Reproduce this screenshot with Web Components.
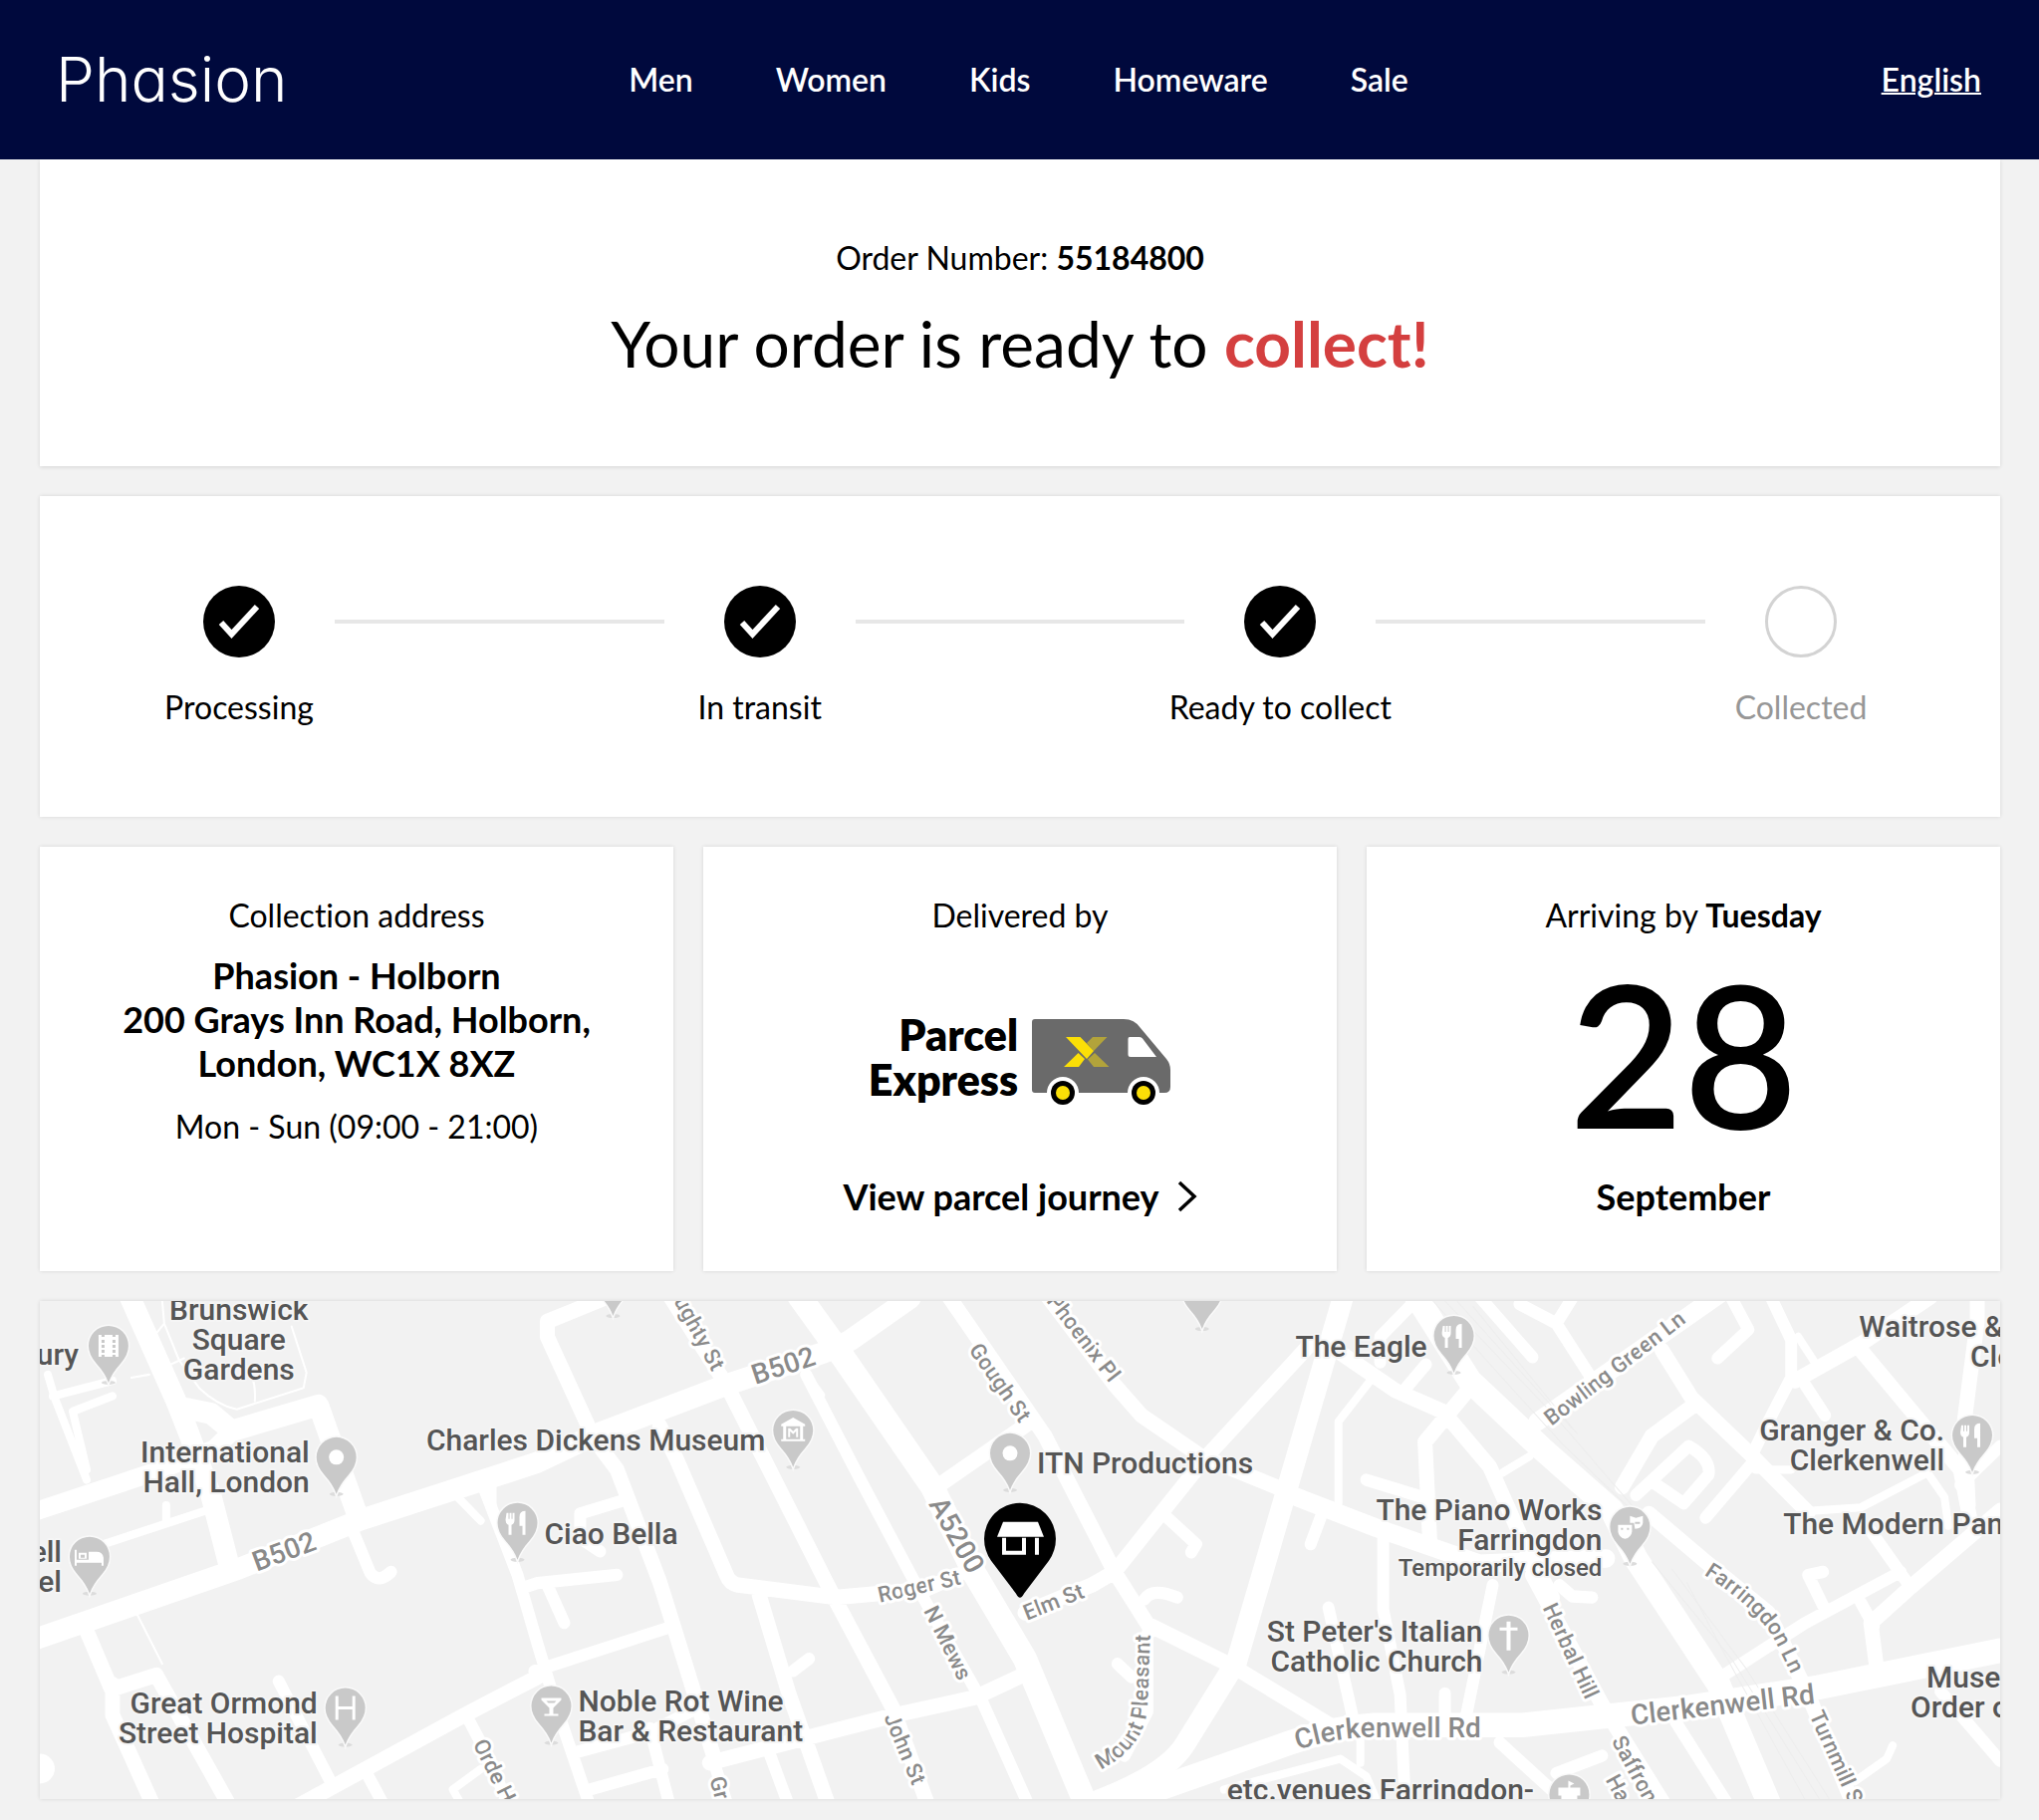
<!DOCTYPE html>
<html lang="en">
<head>
<meta charset="utf-8">
<meta name="viewport" content="width=device-width, initial-scale=1">
<title>Phasion - Your order</title>
<style>
    :root {
        --navy: #00093d;
        --page: #f2f2f2;
        --red: #d43f3f;
        --line: #e7e7e7;
        --muted: #979797;
    }

    body {
        background-color: var(--page);
        color: #000;
        font-family: Lato, "Open Sans", sans-serif;
        font-size: 32px;
        font-variant-ligatures: none;
        line-height: 40px;
        margin: 0;
    }

    main {
        display: flex;
        flex-direction: column;
        gap: 30px;
        padding: 0 39px 20px 40px;
    }

    .columns {
        display: grid;
        gap: 30px;
        grid-template-columns: repeat(3, 1fr);
    }
</style>
</head>
<body>
    <site-header>
        <a slot="nav" href="#men">Men</a>
        <a slot="nav" href="#women">Women</a>
        <a slot="nav" href="#kids">Kids</a>
        <a slot="nav" href="#homeware">Homeware</a>
        <a slot="nav" href="#sale">Sale</a>
        <a slot="language" href="#language">English</a>
    </site-header>

    <main>
        <order-status number="55184800">Your order is ready to <strong>collect!</strong></order-status>

        <progress-tracker>
            <progress-step done>Processing</progress-step>
            <progress-step done>In transit</progress-step>
            <progress-step done>Ready to collect</progress-step>
            <progress-step>Collected</progress-step>
        </progress-tracker>

        <section class="columns">
            <info-card>
                <span slot="title">Collection address</span>
                <collection-address hours="Mon - Sun (09:00 - 21:00)">
                    Phasion - Holborn<br>200 Grays Inn Road, Holborn,<br>London, WC1X 8XZ
                </collection-address>
            </info-card>
            <info-card>
                <span slot="title">Delivered by</span>
                <parcel-carrier href="#journey">Parcel<br>Express</parcel-carrier>
            </info-card>
            <info-card>
                <span slot="title">Arriving by <b>Tuesday</b></span>
                <arrival-date day="28" month="September"></arrival-date>
            </info-card>
        </section>

        <store-map></store-map>
    </main>

<script>
    class SiteHeader extends HTMLElement {
        constructor() {
            super();
            this.attachShadow({mode: 'open'});
        }

        connectedCallback() {
            this.shadowRoot.innerHTML =
            `<style>
                :host {
                    align-items: center;
                    background-color: var(--navy);
                    box-sizing: border-box;
                    color: #fff;
                    display: grid;
                    font-weight: 600;
                    grid-template-columns: 1fr auto 1fr;
                    min-height: 160px;
                    padding: 0 58px 0 56px;
                    position: relative;
                }

                #logo {
                    color: inherit;
                    font-family: Inter, Lato, sans-serif;
                    font-feature-settings: "cv11";
                    font-size: 62px;
                    font-weight: 300;
                    line-height: 64px;
                    text-decoration: none;
                }

                nav {
                    display: flex;
                    gap: 83px;
                }

                ::slotted(a) {
                    color: inherit;
                    text-decoration: none;
                }

                ::slotted([slot="language"]) {
                    justify-self: end;
                    text-decoration: underline;
                    text-decoration-thickness: 2px;
                }
            </style>
            <a id="logo" href="#home">Phasion</a>
            <nav><slot name="nav"></slot></nav>
            <slot name="language"></slot>`;
        }
    }

    class OrderStatus extends HTMLElement {
        constructor() {
            super();
            this.attachShadow({mode: 'open'});
        }

        connectedCallback() {
            this.shadowRoot.innerHTML =
            `<style>
                :host {
                    background-color: #fff;
                    box-shadow: 0 1px 4px rgba(0, 0, 0, 0.12);
                    display: block;
                    padding: 79px 40px 85px;
                    text-align: center;
                }

                p, h1 { margin: 0; }

                h1 {
                    font-size: 64px;
                    font-weight: 400;
                    line-height: 76px;
                    margin-top: 28px;
                }

                ::slotted(strong) {
                    color: var(--red);
                    font-weight: 700;
                }
            </style>
            <p>Order Number: <b>${this.getAttribute('number')}</b></p>
            <h1><slot></slot></h1>`;
        }
    }

    class ProgressTracker extends HTMLElement {
        constructor() {
            super();
            this.attachShadow({mode: 'open'});
        }

        connectedCallback() {
            this.shadowRoot.innerHTML =
            `<style>
                :host {
                    background-color: #fff;
                    box-shadow: 0 0 4px rgba(0, 0, 0, 0.12);
                    display: flex;
                    padding: 90px 104px;
                }
            </style>
            <slot></slot>`;
        }
    }

    class ProgressStep extends HTMLElement {
        constructor() {
            super();
            this.attachShadow({mode: 'open'});
        }

        connectedCallback() {
            const done = this.hasAttribute('done');

            // every step but the first draws the line that leads to it
            this.shadowRoot.innerHTML =
            `<style>
                :host {
                    display: flex;
                    flex: 1 1 192px;
                }

                :host(:first-child) { flex: 0 0 192px; }
                :host(:first-child) #line { display: none; }

                #line {
                    background-color: var(--line);
                    flex: 1;
                    height: 4px;
                    margin-top: 34px;
                }

                #step {
                    align-items: center;
                    color: ${done ? 'inherit' : 'var(--muted)'};
                    display: flex;
                    flex-direction: column;
                    gap: 30px;
                    width: 192px;
                    white-space: nowrap;
                }

                svg { display: block; }
            </style>
            <div id="line"></div>
            <div id="step">
                <svg width="72" height="72" viewBox="-36 -36 72 72" aria-hidden="true">
                    ${done
                    ? `<circle r="36"/><path d="M-18 1 -7.500 12.500 18-15" fill="none" stroke="#fff" stroke-width="6"/>`
                    : `<circle r="34.500" fill="#fff" stroke="#d3d3d3" stroke-width="3"/>`}
                </svg>
                <span><slot></slot></span>
            </div>`;
        }
    }

    class InfoCard extends HTMLElement {
        constructor() {
            super();
            this.attachShadow({mode: 'open'});
        }

        connectedCallback() {
            this.shadowRoot.innerHTML =
            `<style>
                :host {
                    background-color: #fff;
                    box-shadow: 0 0 4px rgba(0, 0, 0, 0.12);
                    box-sizing: border-box;
                    display: flex;
                    flex-direction: column;
                    min-height: 426px;
                    padding: 49px 40px 53px;
                    text-align: center;
                }

                h2 {
                    font: inherit;
                    margin: 0;
                }
            </style>
            <h2><slot name="title"></slot></h2>
            <slot></slot>`;
        }
    }

    class CollectionAddress extends HTMLElement {
        constructor() {
            super();
            this.attachShadow({mode: 'open'});
        }

        connectedCallback() {
            this.shadowRoot.innerHTML =
            `<style>
                :host { display: block; }

                p { margin: 0; }

                #address {
                    font-size: 36px;
                    font-weight: 700;
                    line-height: 44px;
                    margin-top: 18px;
                }

                #hours { margin-top: 22px; }
            </style>
            <p id="address"><slot></slot></p>
            <p id="hours">${this.getAttribute('hours')}</p>`;
        }
    }

    class ParcelCarrier extends HTMLElement {
        constructor() {
            super();
            this.attachShadow({mode: 'open'});
        }

        connectedCallback() {
            this.shadowRoot.innerHTML =
            `<style>
                :host {
                    align-items: center;
                    display: flex;
                    flex: 1;
                    flex-direction: column;
                    justify-content: space-between;
                }

                #carrier {
                    align-items: center;
                    display: flex;
                    font-size: 43px;
                    font-weight: 800;
                    gap: 14px;
                    line-height: 45px;
                    margin-top: 77px;
                    text-align: right;
                }

                #carrier span { padding-bottom: 10px; }

                a {
                    align-items: center;
                    color: inherit;
                    display: flex;
                    font-size: 36px;
                    font-weight: 700;
                    gap: 18px;
                    line-height: 44px;
                    text-decoration: none;
                }

                svg { display: block; }
            </style>
            <div id="carrier">
                <span><slot></slot></span>
                <svg width="140" height="87" viewBox="0 0 140 87" aria-hidden="true">
                    <path fill="#6a6a6a" d="M3 0H92Q103 0 109 9L135 40Q139 45 139 51V68Q139 74 133 74H3Q0 74 0 71V3Q0 0 3 0Z"/>
                    <path fill="#fff" d="M98 18H108Q110 18 111 19.500L125 38H99Q96.500 38 96.500 35.500V20Q96.500 18 98 18Z"/>
                    <path fill="#b2a33b" d="M61 18H75.500L62 32 55 24ZM63 34 77.500 48H62L56 40.500Z"/>
                    <path fill="#fbdf07" d="M34 18H48.500L62 32 55 40ZM46.500 34 53 40 47 48H32Z"/>
                    <g fill="#fff"><circle cx="31" cy="74" r="16"/><circle cx="112" cy="74" r="16"/></g>
                    <circle cx="31" cy="74" r="12"/><circle cx="112" cy="74" r="12"/>
                    <g fill="#fbdf07"><circle cx="31" cy="74" r="7"/><circle cx="112" cy="74" r="7"/></g>
                </svg>
            </div>
            <a href="${this.getAttribute('href')}">View parcel journey
                <svg width="20" height="32" viewBox="0 0 20 32" aria-hidden="true">
                    <path d="M2 2 17 16 2 30" fill="none" stroke="#000" stroke-width="3.500"/>
                </svg>
            </a>`;
        }
    }

    class ArrivalDate extends HTMLElement {
        constructor() {
            super();
            this.attachShadow({mode: 'open'});
        }

        connectedCallback() {
            this.shadowRoot.innerHTML =
            `<style>
                :host {
                    display: flex;
                    flex: 1;
                    flex-direction: column;
                    justify-content: space-between;
                }

                #day {
                    font-size: 198px;
                    font-weight: 600;
                    line-height: 200px;
                    margin-top: 18px;
                }

                #month {
                    font-size: 36px;
                    font-weight: 700;
                    line-height: 44px;
                }
            </style>
            <span id="day">${this.getAttribute('day')}</span>
            <span id="month">${this.getAttribute('month')}</span>`;
        }
    }

    // roads by stroke width
    const ROADS = {
        24: [
            'M763-5 800 45 897 182 940 268 990 350 1050 490',
            'M1090 489 1257 432Q1300 417 1340 415L1490 415 1654 398 1787 378 1970 342',
            'M1383-5 1437 78 1510 145 1580 205 1604 252 1687 375 1737 490'
        ],
        21: [
            'M-5 331 200 262 323 214 500 158 560 130 690 82 780 53Q800 47 815 38L875-3',
            'M90-5 137 98 150 130 172 190 190 258',
            'M147 105 172 110 193 127 280 102 320 212',
            'M1310-5 1253 185 1203 352 1150 435Q1130 465 1055 492'
        ],
        18: ['M-5 206 113 168 175 145 193 128', 'M1250 187 1343 222 1447 257 1574 252', 'M1505 118 1690-8'],
        15: [
            'M250 499 427 405 500 368', 'M48 325 72 380 117 366 193 498', 'M73 375V405L116 498',
            'M568-3 510 20V35L557 135 580 165 623 275 640 328 678 448',
            'M633-5 690 82 797 288 857 398 892 492', 'M723 288 753 385 792 492',
            'M623 122 640 155 690 268Q693 276 702 278L800 290 890 282 923 268',
            'M673 452 780 425 860 405 940 388 990 365',
            'M913-5 1010 132 1080 265 1117 322', 'M907 178 990 122',
            'M1010-8 1080 82 1107 112 1167 152 1253 186', 'M1275 44 1170 155 1080 265 1057 278 990 305',
            'M1117 318 1200 358 1300 417', 'M1437 85 1392 138 1397 238',
            'M1303 48 1363 88 1410 108 1457 162 1495 245 1520 290',
            'M1630 48 1660 95 1717 148 1777 207', 'M1665 100 1620 132 1590 182',
            'M1764 78 1830 42 1900-4', 'M1830 48 1930 165 1940 215', 'M1947-4V20L1934 118 1938 200',
            'M1970 205 1880 280 1840 315 1846 360', 'M1617 208 1674 255 1737 305 1777 385 1822 492',
            'M1500 268 1570 395 1632 492'
        ],
        12: [
            'M315 226 332 266Q340 277 353 265', 'M240 372 292 470', 'M330 465 345 492', 'M430 408 443 432 470 490',
            'M447 185 480 268 500 335 520 400 552 492', 'M487 280 500 276 580 268', 'M510 278 527 315',
            'M497 362 637 318', 'M590 194 543 208V232L563 245', 'M757 362 773 350', 'M770 72 823 172 883 282 947 392 993 492',
            'M537 442 613 422 667 395', 'M553 478 626 458', 'M613 418 632 490', 'M733 442 752 492', 'M677 450 690 490',
            'M1380 2 1347 35V60', 'M1393 62 1373 85', 'M1333 175 1390 192', 'M1447-4 1500 55', 'M1133 212 1162 238 1157 246',
            'M1110 292Q1118 280 1143 290', 'M1287 212 1277 238', 'M1350 232V302L1367 385 1372 490', 'M1295 300 1320 410',
            'M1460 278 1433 408', 'M1412 384V408', 'M1083 355 1097 368', 'M1113 325V402L1090 445', 'M1467 432 1530 488',
            'M1487 3 1524 22 1557 72M1524 22 1540-3', 'M1604 190 1657 142Q1680 155 1677 170L1652 198 1622 178',
            'M1724 155 1674 212', 'M1700-3 1717 28 1686 56', 'M1740-3 1760 38V75L1737 118 1720 152', 'M1774 82 1794 112',
            'M1970 142 1930 180', 'M1840 225 1880 280', 'M1694 365 1774 315 1870 265', 'M1830 295 1843 318',
            'M1792 298 1777 268 1792 265', 'M1527 278 1540 289 1560 290', 'M1644 412 1696 492', 'M1910 382 1970 450',
            'M1524 462 1570 445'
        ],
        8: [
            'M42 245 167 205', 'M127 215V200', 'M8 72 15 95 47 175', 'M13 93 73 78', 'M73 93 33 108 47 165',
            'M443 458 415 478 422 490', 'M420 192 443 215', 'M455 182V202', 'M1337 78 1305 118V198', 'M1470 168 1497 152',
            'M1190 478 1307 448 1333 465 1345 492', 'M1327 425V452', 'M1767 35 1787 65', 'M1784 205 1830 202 1897 168 1914 192 1918 220',
            'M1724 165 1760 165', 'M1862 435 1856 448 1824 470', 'M770 72 785 92'
        ],
        2: [
            'M123 0 125 22 140 58 160 85Q178 102 198 106L265 85 268 70 253 25', 'M110 40 125 22', 'M125 65 145 56',
            'M92 75 110 72', 'M98 307 123 355', 'M205 60Q218 75 216 98'
        ]
    };

    // railway tracks
    const RAILS = [
        'M1400 0 1530 140 1600 205', 'M1412 0 1520 110 1600 200', 'M1424 0 1540 125', 'M1440 5 1545 130',
        'M1620 255 1700 350 1790 490', 'M1640 262 1715 360 1800 490', 'M1655 275 1690 340 1775 490'
    ];

    // x, baseline, anchor, lines
    const PLACES = [
        [200, 19, 'middle', 'Brunswick', 'Square', 'Gardens'],
        [39, 64, 'end', 'ury'],
        [271, 162, 'end', 'International', 'Hall, London'],
        [22, 262, 'end', 'ell', 'el'],
        [279, 414, 'end', 'Great Ormond', 'Street Hospital'],
        [729, 150, 'end', 'Charles Dickens Museum'],
        [507, 244, 'start', 'Ciao Bella'],
        [541, 412, 'start', 'Noble Rot Wine', 'Bar & Restaurant'],
        [1002, 173, 'start', 'ITN Productions'],
        [1394, 56, 'end', 'The Eagle'],
        [1570, 220, 'end', 'The Piano Works', 'Farringdon'],
        [1450, 342, 'end', "St Peter's Italian", 'Catholic Church'],
        [1914, 140, 'end', 'Granger & Co.', 'Clerkenwell'],
        [1828, 36, 'start', 'Waitrose &'],
        [1940, 66, 'start', 'Cle'],
        [1752, 234, 'start', 'The Modern Pan'],
        [1896, 388, 'start', 'Muse'],
        [1880, 418, 'start', 'Order o'],
        [1193, 502, 'start', 'etc.venues Farringdon-']
    ];

    // baseline path, text, size
    const STREETS = [
        ['M637 0 697 111', 'ughty St', 22], ['M218 272 318 235', 'B502', 28], ['M719 84 819 51', 'B502', 28],
        ['M933 49 1003 150', 'Gough St', 22], ['M844 303 942 281', 'Roger St', 22], ['M893 204 963 328', 'A5200', 28],
        ['M888 311 938 412', 'N Mews', 22], ['M848 418 888 514', 'John St', 22], ['M673 480 683 518', 'Gr', 22],
        ['M992 321 1082 285', 'Elm St', 22], ['M1011 0 1106 123', 'Phoenix Pl', 22],
        ['M1066 471Q1108 450 1113 411L1117 308', 'Mount Pleasant', 22],
        ['M1264 451Q1300 439 1340 438L1480 438', 'Clerkenwell Rd', 28], ['M1600 426 1820 400', 'Clerkenwell Rd', 28],
        ['M1519 126 1699-13', 'Bowling Green Ln', 22], ['M1672 275Q1728 310 1745 344L1775 406', 'Farringdon Ln', 22],
        ['M1510 308 1570 437', 'Herbal Hill', 22], ['M1579 442 1624 525', 'Saffron H', 22],
        ['M1573 481 1598 527', 'Ha', 22], ['M1778 416 1828 526', 'Turnmill S', 22], ['M435 445 475 525', 'Orde H', 22]
    ];

    // x and y of the head of each marker, and its glyph
    const PINS = [
        [69, 45, 'film'], [298, 157, 'dot'], [50, 257, 'bed'], [307, 409, 'hospital'], [480, 223, 'food'],
        [757, 130, 'museum'], [975, 153, 'dot'], [514, 407, 'bar'], [576, -22, 'dot'], [1168, -9, 'dot'],
        [1421, 35, 'food'], [1476, 336, 'church'], [1598, 227, 'theatre'], [1942, 135, 'food'], [1537, 496, 'venue']
    ];

    const GLYPHS = {
        dot: '<circle r="7.500"/>',
        film: '<path fill-rule="evenodd" d="M-10-11h3v2h3v-2h8v2h3v-2h3v22h-3v-2h-3v2h-8v-2h-3v2h-3ZM-7-6v3h3v-3ZM4-6v3h3v-3ZM-7-1v3h3v-3ZM4-1v3h3v-3ZM-7 4v3h3v-3ZM4 4v3h3v-3Z"/>',
        bed: '<path fill-rule="evenodd" d="M-15-7h2V3H-1V-5H7Q13-5 14 1V9H12V6H-13V9h-2ZM-11-4h8v6h-8ZM-9-2v3h4v-3Z"/>',
        hospital: '<path d="M-10-12h3v10.500H7V-12h3v24H7V1.500H-7V12h-3Z"/>',
        food: '<path d="M-11-10h2v6h1v-6h2v6h1v-6h2v7q0 4-3 5v10h-3V2q-3-1-3-5ZM8-12V12H5V3H2V-6Q2-12 8-12Z"/>',
        museum: '<path fill-rule="evenodd" d="M0-13 12-6V-4H10V9H12V11H-12V9h2V-4h-2v-2ZM-7-4V9H7V-4ZM-5 7V-2h2L0 1 3-2H5V7H3V1L0 4-3 1V7Z"/>',
        bar: '<path d="M-10-8H10V-6L2 2V8H7V10H-7V8h5V2L-10-6ZM-5-5-3-3H3L5-5Z" fill-rule="evenodd"/>',
        church: '<path d="M-2-14H2v6H9v3H2V15H-2V-5H-9V-8h7Z"/>',
        theatre: '<path fill-rule="evenodd" d="M-12-2H2V5Q1 11-5 12-11 11-12 5ZM-9 1v2h2v-2ZM-3 1v2h2v-2ZM0-11 6-9 13-11V-4Q12 2 5 2L4-4H0ZM5-5v2h5v-2Z"/>',
        venue: '<path fill-rule="evenodd" d="M-1-14 5-11 1-9V-7H11V1H8V14H-8V1h-3V-7H-1Z"/>'
    };

    class StoreMap extends HTMLElement {
        constructor() {
            super();
            this.attachShadow({mode: 'open'});
        }

        connectedCallback() {
            this.render();
        }

        render() {
            this.shadowRoot.innerHTML = this.CSS() + this.HTML();
        }

        HTML() {
            const roads = Object.keys(ROADS).map(width =>
                `<path stroke-width="${width}" d="${ROADS[width].join('')}"/>`).join('');

            const pins = PINS.map(([x, y, glyph]) =>
                `<g transform="translate(${x} ${y})">
                    <ellipse cy="37" rx="7" ry="2" fill="#dcdcdc"/>
                    <path class="pin" d="M0 37Q-3 28-12 18-20 9-20 0A20 20 0 0 1 20 0Q20 9 12 18 3 28 0 37Z"/>
                    <g fill="#fff">${GLYPHS[glyph]}</g>
                </g>`).join('');

            const streets = STREETS.map(([path, name, size], i) =>
                `<path id="street-${i}" d="${path}" fill="none"/>
                <text class="street" font-size="${size}"><textPath href="#street-${i}">${name}</textPath></text>`).join('');

            const places = PLACES.map(([x, y, anchor, ...lines]) =>
                `<text class="place" y="${y}" text-anchor="${anchor}">${lines.map((line, i) =>
                    `<tspan x="${x}" dy="${i ? 30 : 0}">${line.replace('&', '&amp;')}</tspan>`).join('')}</text>`).join('');

            return `<svg viewBox="0 0 1970 501" preserveAspectRatio="xMidYMid slice" role="img" aria-label="Map of the collection store">
                <g transform="scale(1 1.027)" fill="none">
                    <g stroke="#fff" stroke-linecap="round" stroke-linejoin="round">${roads}</g>
                    <g stroke="#ededed">${RAILS.map(d => `<path d="${d}"/>`).join('')}</g>
                </g>
                <circle cx="0" cy="470" r="15" fill="#fff"/>
                ${pins}
                ${streets}
                ${places}
                <text class="place note" x="1570" y="276" text-anchor="end">Temporarily closed</text>
                <g transform="translate(985 239)">
                    <path d="M0 59Q-2 59-4 55L-29 22Q-36 12-36 0A36 36 0 0 1 36 0Q36 12 29 22L4 55Q2 59 0 59Z"/>
                    <path fill="#fff" d="M-17-17H18L24-2H-23Z"/>
                    <path fill="none" stroke="#fff" stroke-width="4" d="M-16-1V14H4V-1M17-1V16"/>
                </g>
            </svg>`;
        }

        CSS() {
            return `<style>
                :host {
                    box-shadow: 0 0 4px rgba(0, 0, 0, 0.12);
                    display: block;
                    overflow: hidden;
                }

                svg {
                    display: block;
                    font-family: Roboto, sans-serif;
                    height: auto;
                    width: 100%;
                }

                text {
                    font-weight: 500;
                    paint-order: stroke;
                    stroke-linejoin: round;
                }

                .place {
                    fill: #555;
                    font-size: 30px;
                    stroke: #f5f5f5;
                    stroke-width: 4px;
                }

                .note { font-size: 24px; }

                .street {
                    fill: #8a8a8a;
                    stroke: #fff;
                    stroke-width: 6px;
                }

                .pin {
                    fill: #c9c9c9;
                    paint-order: stroke;
                    stroke: #fafafa;
                    stroke-width: 3px;
                }
            </style>`;
        }
    }

    window.customElements.define('site-header', SiteHeader);
    window.customElements.define('order-status', OrderStatus);
    window.customElements.define('progress-tracker', ProgressTracker);
    window.customElements.define('progress-step', ProgressStep);
    window.customElements.define('info-card', InfoCard);
    window.customElements.define('collection-address', CollectionAddress);
    window.customElements.define('parcel-carrier', ParcelCarrier);
    window.customElements.define('arrival-date', ArrivalDate);
    window.customElements.define('store-map', StoreMap);
</script>
</body>
</html>
